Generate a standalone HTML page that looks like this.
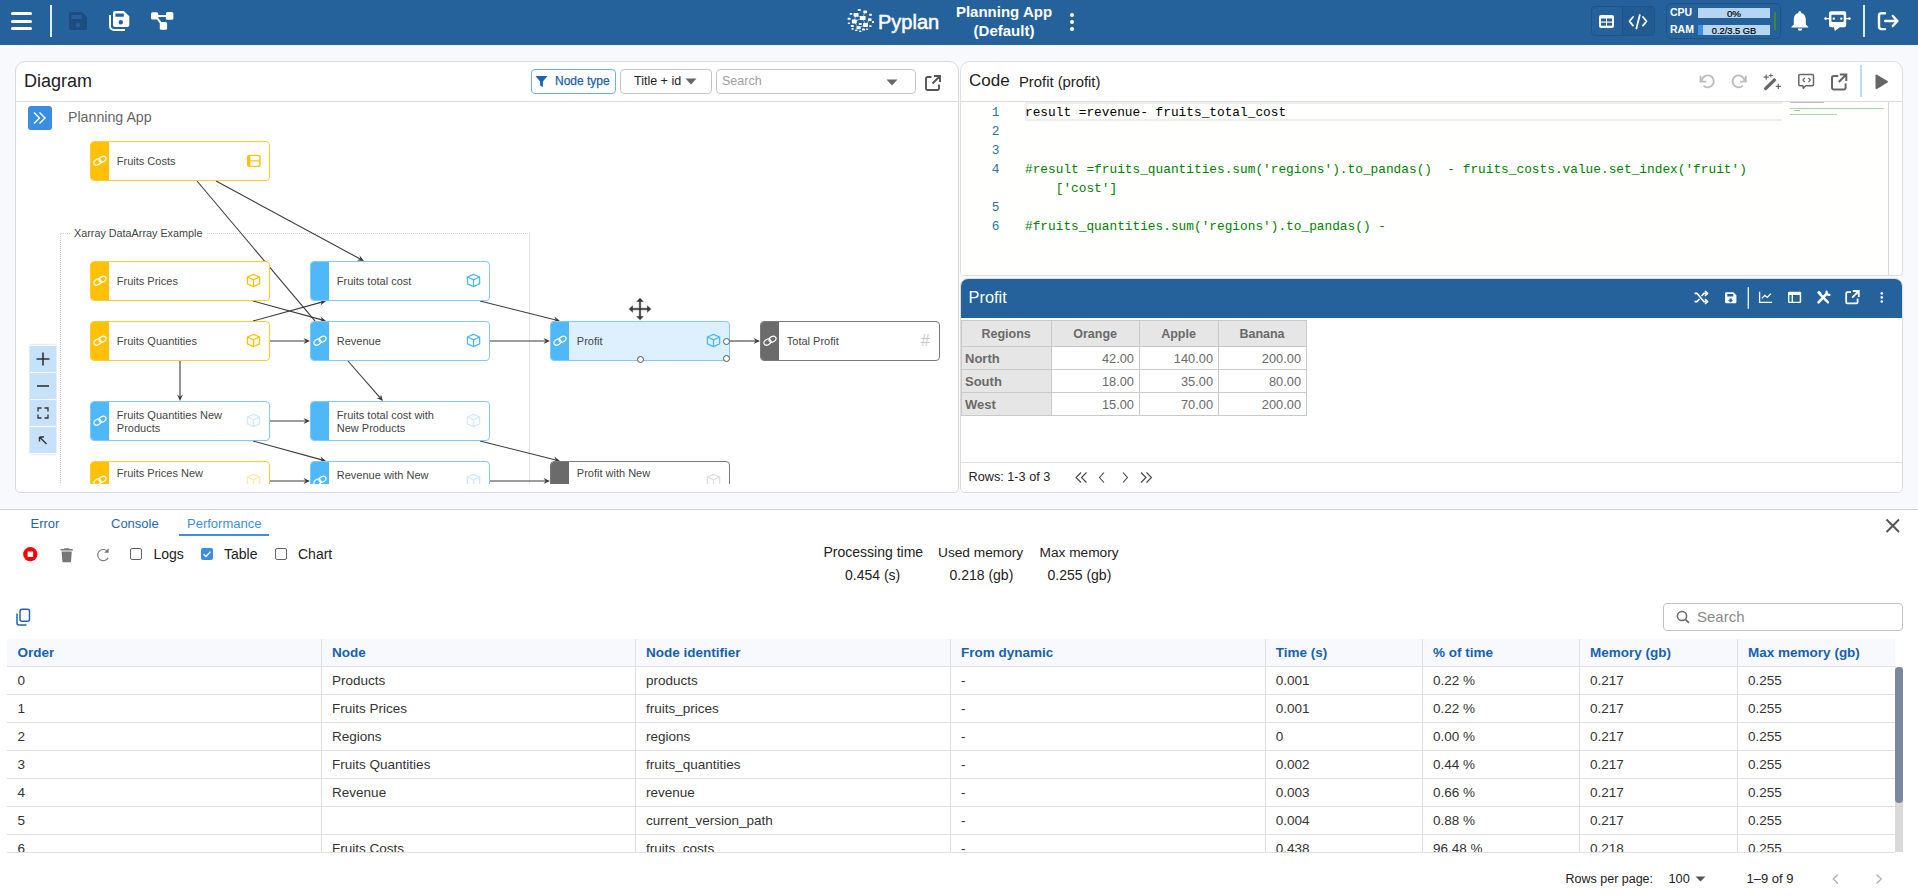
<!DOCTYPE html>
<html><head><meta charset="utf-8">
<style>
*{box-sizing:border-box;margin:0;padding:0}
html,body{width:1918px;height:896px;overflow:hidden;background:#f7f9fd;font-family:"Liberation Sans",sans-serif;color:#212121}
.a{position:absolute}
.nw{white-space:nowrap}
#hdr{left:0;top:0;width:1918px;height:45px;background:#25629b}
.panel{background:#fff;border:1px solid #d9d9d9;border-radius:10px;overflow:hidden}
</style></head><body>

<!-- HEADER -->
<div id="hdr" class="a">
  <!-- hamburger -->
  <div class="a" style="left:11px;top:12px;width:21px;height:3px;border-radius:2px;background:#fff"></div>
  <div class="a" style="left:11px;top:19.5px;width:21px;height:3px;border-radius:2px;background:#fff"></div>
  <div class="a" style="left:11px;top:27px;width:21px;height:3px;border-radius:2px;background:#fff"></div>
  <div class="a" style="left:50px;top:5px;width:2px;height:32px;background:#dcefff"></div>
  <!-- save disabled -->
  <svg class="a" style="left:69px;top:12px" width="18" height="18" viewBox="0 0 18 18"><path fill="#1d4d7e" d="M2 0h11l5 5v11a2 2 0 0 1-2 2H2a2 2 0 0 1-2-2V2a2 2 0 0 1 2-2zM2.5 3v4h10V3zM9 10.8a2.2 2.2 0 1 0 0 4.4a2.2 2.2 0 1 0 0-4.4z"/></svg>
  <!-- save all -->
  <svg class="a" style="left:108px;top:10px" width="23" height="22" viewBox="0 0 23 22"><path fill="#fff" fill-rule="evenodd" d="M7 1.1h8.8l5.5 5.2v8.8a2 2 0 0 1-2 2H7a2 2 0 0 1-2-2V3.1a2 2 0 0 1 2-2zM7.4 3.6v3.2h8.4V3.6zM12.8 10.1a2.2 2.2 0 1 0 0 4.4a2.2 2.2 0 1 0 0-4.4z"/><path fill="none" stroke="#fff" stroke-width="2" d="M2 5v11a4 4 0 0 0 4 4h11"/></svg>
  <!-- tree -->
  <svg class="a" style="left:150px;top:11px" width="26" height="20" viewBox="0 0 26 20"><rect x="1" y="1.3" width="7.3" height="7.3" rx="1.6" fill="#fff"/><rect x="15.9" y="1.1" width="7.5" height="7.7" rx="1.6" fill="#fff"/><rect x="9.8" y="11.1" width="7.3" height="7.7" rx="1.6" fill="#fff"/><path d="M7 5h10M6.8 6.5l4.3 6" stroke="#fff" stroke-width="2.1"/></svg>
  <!-- logo -->
  <svg class="a" style="left:840px;top:0px" width="40" height="40" viewBox="0 0 40 40" fill="#fff"><g stroke="#fff" stroke-width="0.6" opacity="0.85"><path d="M16 15L22.5 18M22.5 18L25.2 11.8M22.5 18L25.5 24.8M14 21.5L16 15M14 21.5L18.6 27.7M18.6 27.7L25.5 24.8M25.5 24.8L29.8 19.7M14 21.5L22.5 18"/></g><rect x="17.7" y="9.1" width="3.0" height="2.0" rx="0.6"/><rect x="23.3" y="10.5" width="3.8" height="2.7" rx="0.6"/><rect x="9.6" y="12.9" width="2.7" height="1.9" rx="0.6"/><rect x="13.6" y="12.9" width="4.9" height="3.8" rx="0.6"/><rect x="29.1" y="13.8" width="2.8" height="2.0" rx="0.6"/><rect x="19.9" y="15.9" width="5.7" height="4.2" rx="0.6"/><rect x="7.6" y="17.8" width="3.0" height="2.0" rx="0.6"/><rect x="28.1" y="18.3" width="3.4" height="2.7" rx="0.6"/><rect x="11.9" y="19.6" width="4.9" height="3.8" rx="0.6"/><rect x="32.0" y="21.0" width="2.0" height="2.0" rx="0.6"/><rect x="7.8" y="22.6" width="2.3" height="1.5" rx="0.6"/><rect x="18.8" y="22.9" width="3.0" height="2.0" rx="0.6"/><rect x="23.1" y="23.1" width="4.9" height="3.8" rx="0.6"/><rect x="10.8" y="25.0" width="3.0" height="2.0" rx="0.6"/><rect x="29.1" y="25.3" width="2.5" height="1.7" rx="0.6"/><rect x="16.5" y="26.2" width="4.2" height="3.0" rx="0.6"/><rect x="11.4" y="28.0" width="2.3" height="1.7" rx="0.6"/><rect x="22.0" y="28.6" width="3.0" height="2.0" rx="0.6"/><rect x="26.1" y="28.4" width="2.0" height="1.5" rx="0.6"/><rect x="15.1" y="29.6" width="2.3" height="1.5" rx="0.6"/><rect x="19.1" y="30.6" width="2.3" height="1.5" rx="0.6"/></svg>
  <div class="a nw" style="left:878px;top:9.7px;font-size:20px;line-height:24px;color:#fff;-webkit-text-stroke:0.5px #fff">Pyplan</div>
  <div class="a nw" style="left:940px;top:3px;width:128px;text-align:center;font-size:15px;line-height:18.8px;font-weight:bold;color:#fff">Planning App<br>(Default)</div>
  <div class="a" style="left:1069.5px;top:12.5px;width:4px;height:4px;border-radius:2px;background:#fff"></div>
  <div class="a" style="left:1069.5px;top:19.5px;width:4px;height:4px;border-radius:2px;background:#fff"></div>
  <div class="a" style="left:1069.5px;top:26.5px;width:4px;height:4px;border-radius:2px;background:#fff"></div>
  <!-- toggle group -->
  <div class="a" style="left:1591px;top:6px;width:64px;height:30px;border:1px solid #1f5486;border-radius:4px;overflow:hidden">
    <div class="a" style="left:30px;top:0;width:33px;height:28px;background:#225b91;border-left:1px solid #1f5486"></div>
  </div>
  <svg class="a" style="left:1598px;top:14px" width="17" height="15" viewBox="0 0 17 15"><rect x="1" y="1" width="15" height="13" rx="2" fill="#fff"/><rect x="3" y="4.5" width="5" height="3" fill="#25629b"/><rect x="9" y="4.5" width="5" height="3" fill="#25629b"/><rect x="3" y="8.7" width="5" height="3" fill="#25629b"/><rect x="9" y="8.7" width="5" height="3" fill="#25629b"/></svg>
  <svg class="a" style="left:1627px;top:13px" width="22" height="17" viewBox="0 0 22 17" fill="none" stroke="#fff" stroke-width="1.8" stroke-linecap="round" stroke-linejoin="round"><path d="M6 4L2.5 8.3L6 12.6M16 4l3.5 4.3L16 12.6M12.8 2l-3.4 13.5"/></svg>
  <!-- perf box -->
  <div class="a" style="left:1666px;top:3px;width:115px;height:36px;border:1px solid #1f5486;border-radius:5px"></div>
  <div class="a nw" style="left:1670px;top:6px;font-size:10.5px;line-height:12px;font-weight:bold;color:#fff">CPU</div>
  <div class="a nw" style="left:1670px;top:23px;font-size:10.5px;line-height:12px;font-weight:bold;color:#fff">RAM</div>
  <div class="a" style="left:1698px;top:8px;width:72px;height:10px;background:#b5d5f2"></div>
  <div class="a nw" style="left:1698px;top:8px;width:72px;text-align:center;font-size:9.8px;line-height:12px;color:#000;-webkit-text-stroke:0.2px #000">0%</div>
  <div class="a" style="left:1698px;top:25px;width:72px;height:10px;background:#b5d5f2"></div>
  <div class="a" style="left:1698px;top:25px;width:4.5px;height:10px;background:#3d8fe0"></div>
  <div class="a nw" style="left:1698px;top:25px;width:72px;text-align:center;font-size:9.3px;line-height:12px;color:#000;-webkit-text-stroke:0.2px #000">0.2/3.5 GB</div>
  <div class="a" style="left:1774px;top:12px;width:2px;height:18px;background:#3b8a2e"></div>
  <!-- bell -->
  <svg class="a" style="left:1790px;top:10px" width="20" height="22" viewBox="0 0 20 22"><path fill="#fff" d="M10 1.2c.7 0 1.2.5 1.2 1.1v.6c3 .7 4.6 3.3 4.6 6.4v5.2l2.5 2.6v.3H1.3v-.3l2.5-2.6V9.3c0-3.1 1.6-5.7 4.6-6.4v-.6c0-.6.5-1.1 1.2-1.1zM7.8 18.6h4.4a2.2 2.2 0 0 1-4.4 0z"/></svg>
  <!-- bot -->
  <svg class="a" style="left:1824px;top:10px" width="28" height="22" viewBox="0 0 28 22"><path fill="#fff" d="M7 1.2h13.2a2 2 0 0 1 2 2v12.1a2 2 0 0 1-2 2h-4.5l-4.8 3.6l-1-3.6H7a2 2 0 0 1-2-2V3.2a2 2 0 0 1 2-2z"/><rect x="7.4" y="4.7" width="12.3" height="7.2" rx="1" fill="#25629b"/><circle cx="9.8" cy="8.6" r="1.2" fill="#fff"/><circle cx="17.3" cy="8.6" r="1.2" fill="#fff"/><path d="M1.5 8.6h4M21.5 8.6h4.5" stroke="#fff" stroke-width="1.4"/><circle cx="1.6" cy="8.6" r="1.3" fill="#fff"/><circle cx="25.4" cy="8.6" r="1.3" fill="#fff"/></svg>
  <div class="a" style="left:1863.2px;top:5px;width:2px;height:32px;background:#d8eeff"></div>
  <!-- logout -->
  <svg class="a" style="left:1876px;top:11px" width="24" height="21" viewBox="0 0 24 21" fill="none" stroke="#fff" stroke-width="2.4" stroke-linecap="round" stroke-linejoin="round"><path d="M9 2.3H5.5a2.5 2.5 0 0 0-2.5 2.5v10.8a2.5 2.5 0 0 0 2.5 2.5H9M9.2 10h12M16.8 5l4.6 5l-4.6 5"/></svg>
</div>

<!-- DIAGRAM PANEL -->
<div class="a panel" style="left:15px;top:61px;width:944px;height:432px;border-radius:10px 10px 5px 5px">
  <div class="a nw" style="left:8px;top:9px;font-size:18px;color:#222">Diagram</div>
  <div class="a" style="left:0;top:39px;width:944px;height:1px;background:#dcdcdc"></div>
  <div class="a" style="left:515px;top:7px;width:85px;height:25px;border:1px solid #62b3f4;border-radius:4px"></div>
  <svg class="a" style="left:519px;top:13px" width="13" height="13" viewBox="0 0 13 13"><path fill="#1565b8" d="M0.5 1h12l-4.6 5.4V12L5.1 10.4V6.4z"/></svg>
  <div class="a nw" style="left:539px;top:12px;font-size:12px;line-height:15px;color:#1a5fb0;-webkit-text-stroke:0.25px #1a5fb0">Node type</div>
  <div class="a" style="left:604px;top:7px;width:92px;height:25px;border:1px solid #c4c4c4;border-radius:4px"></div>
  <div class="a nw" style="left:618px;top:12px;font-size:12.5px;line-height:15px;color:#222">Title + id</div>
  <svg class="a" style="left:669px;top:16px" width="12" height="7" viewBox="0 0 12 7"><path fill="#666" d="M0.5 0.5h11L6 6.5z"/></svg>
  <div class="a" style="left:700px;top:7px;width:200px;height:25px;border:1px solid #c4c4c4;border-radius:4px"></div>
  <div class="a nw" style="left:706px;top:12px;font-size:12.5px;line-height:15px;color:#9e9e9e">Search</div>
  <svg class="a" style="left:870px;top:17px" width="12" height="7" viewBox="0 0 12 7"><path fill="#666" d="M0.5 0.5h11L6 6.5z"/></svg>
  <svg class="a" style="left:908px;top:12px" width="18" height="18" viewBox="0 0 18 18" fill="none" stroke="#555" stroke-width="1.9"><path d="M7.5 3H3.8A1.8 1.8 0 0 0 2 4.8v9.4A1.8 1.8 0 0 0 3.8 16h9.4a1.8 1.8 0 0 0 1.8-1.8V10.5M10 2h6v6M16 2L8.5 9.5"/></svg>

  <div class="a" style="left:0;top:40px;width:942px;height:382px;overflow:hidden"><div class="a" style="left:0;top:-40px;width:942px;height:430px">
<div class="a" style="left:44px;top:171px;width:470px;height:300px;border-left:1px dotted #c8c8c8;border-top:1px dotted #d0d0d0;border-right:1px solid #e6e6e6"></div>
<div class="a nw" style="left:54px;top:164px;padding:0 4px;background:#fff;font-size:10.8px;line-height:14px;color:#444">Xarray DataArray Example</div>
<svg class="a" style="left:0;top:0" width="942" height="430"><line x1="181" y1="119" x2="300.4" y2="260.7" stroke="#3c3c3c" stroke-width="1.1"/><line x1="200" y1="119" x2="344.2" y2="197.0" stroke="#3c3c3c" stroke-width="1.1"/><path d="M348 199L340.9 198.5L344.2 197.0L343.7 193.4z" fill="#3c3c3c"/><line x1="237" y1="239" x2="305.9" y2="257.9" stroke="#3c3c3c" stroke-width="1.1"/><path d="M310 259L303.0 260.1L305.9 257.9L304.5 254.5z" fill="#3c3c3c"/><line x1="237" y1="259" x2="305.9" y2="240.1" stroke="#3c3c3c" stroke-width="1.1"/><path d="M310 239L304.5 243.5L305.9 240.1L303.0 237.9z" fill="#3c3c3c"/><line x1="254" y1="279" x2="289.7" y2="279.0" stroke="#3c3c3c" stroke-width="1.1"/><path d="M294 279L287.5 281.9L289.7 279.0L287.5 276.1z" fill="#3c3c3c"/><line x1="164" y1="299" x2="164.0" y2="334.7" stroke="#3c3c3c" stroke-width="1.1"/><path d="M164 339L161.1 332.5L164.0 334.7L166.9 332.5z" fill="#3c3c3c"/><line x1="332" y1="299" x2="364.2" y2="335.8" stroke="#3c3c3c" stroke-width="1.1"/><path d="M367 339L360.5 336.0L364.2 335.8L364.9 332.2z" fill="#3c3c3c"/><line x1="464" y1="239" x2="539.8" y2="258.0" stroke="#3c3c3c" stroke-width="1.1"/><path d="M544 259L537.0 260.2L539.8 258.0L538.4 254.6z" fill="#3c3c3c"/><line x1="474" y1="279" x2="529.7" y2="279.0" stroke="#3c3c3c" stroke-width="1.1"/><path d="M534 279L527.5 281.9L529.7 279.0L527.5 276.1z" fill="#3c3c3c"/><line x1="714" y1="279" x2="739.7" y2="279.0" stroke="#3c3c3c" stroke-width="1.1"/><path d="M744 279L737.5 281.9L739.7 279.0L737.5 276.1z" fill="#3c3c3c"/><line x1="254" y1="359" x2="289.7" y2="359.0" stroke="#3c3c3c" stroke-width="1.1"/><path d="M294 359L287.5 361.9L289.7 359.0L287.5 356.1z" fill="#3c3c3c"/><line x1="237" y1="379" x2="305.9" y2="397.9" stroke="#3c3c3c" stroke-width="1.1"/><path d="M310 399L303.0 400.1L305.9 397.9L304.5 394.5z" fill="#3c3c3c"/><line x1="464" y1="379" x2="539.8" y2="398.0" stroke="#3c3c3c" stroke-width="1.1"/><path d="M544 399L537.0 400.2L539.8 398.0L538.4 394.6z" fill="#3c3c3c"/><line x1="254" y1="419" x2="289.7" y2="419.0" stroke="#3c3c3c" stroke-width="1.1"/><path d="M294 419L287.5 421.9L289.7 419.0L287.5 416.1z" fill="#3c3c3c"/><line x1="474" y1="419" x2="529.7" y2="419.0" stroke="#3c3c3c" stroke-width="1.1"/><path d="M534 419L527.5 421.9L529.7 419.0L527.5 416.1z" fill="#3c3c3c"/></svg>
<div class="a" style="left:74px;top:79px;width:180px;height:40px;background:#fff;border:1.5px solid #ffcb2e;border-radius:4px;overflow:hidden"><div class="a" style="left:-1.5px;top:-1.5px;width:180px;height:40px"><div class="a" style="left:0;top:0;width:19px;height:100%;background:#ffc107"></div><svg class="a" style="left:3px;top:13px" width="14" height="13" viewBox="0 0 14 13" fill="none" stroke="#fff" stroke-width="1.2"><ellipse cx="4.4" cy="8.1" rx="3.7" ry="2.7" transform="rotate(-30 4.4 8.1)"/><ellipse cx="9.5" cy="5.2" rx="3.7" ry="2.7" transform="rotate(-30 9.5 5.2)"/></svg><div class="a nw" style="left:27.3px;top:14px;font-size:11px;line-height:13px;color:#454545">Fruits Costs</div><svg class="a" style="left:156px;top:13px" width="15" height="14" viewBox="0 0 15 14" fill="none" stroke="#ffc107" stroke-width="1.4"><rect x="1.7" y="1.4" width="12.3" height="11" rx="2"/><path d="M1.7 6.9h12.3"/><path d="M2.8 1.5v10.8" stroke-width="3"/></svg></div></div>
<div class="a" style="left:74px;top:199px;width:180px;height:40px;background:#fff;border:1.5px solid #ffcb2e;border-radius:4px;overflow:hidden"><div class="a" style="left:-1.5px;top:-1.5px;width:180px;height:40px"><div class="a" style="left:0;top:0;width:19px;height:100%;background:#ffc107"></div><svg class="a" style="left:3px;top:13px" width="14" height="13" viewBox="0 0 14 13" fill="none" stroke="#fff" stroke-width="1.2"><ellipse cx="4.4" cy="8.1" rx="3.7" ry="2.7" transform="rotate(-30 4.4 8.1)"/><ellipse cx="9.5" cy="5.2" rx="3.7" ry="2.7" transform="rotate(-30 9.5 5.2)"/></svg><div class="a nw" style="left:27.3px;top:14px;font-size:11px;line-height:13px;color:#454545">Fruits Prices</div><svg class="a" style="left:156px;top:12.5px" width="15" height="15" viewBox="0 0 15 15" fill="none" stroke="#ffc107" stroke-width="1.3" stroke-linejoin="round"><path d="M7.5 1.3L13.6 4v6.8L7.5 13.6L1.4 10.8V4z"/><path d="M1.4 4L7.5 6.8L13.6 4M7.5 6.8v6.8"/></svg></div></div>
<div class="a" style="left:74px;top:259px;width:180px;height:40px;background:#fff;border:1.5px solid #ffcb2e;border-radius:4px;overflow:hidden"><div class="a" style="left:-1.5px;top:-1.5px;width:180px;height:40px"><div class="a" style="left:0;top:0;width:19px;height:100%;background:#ffc107"></div><svg class="a" style="left:3px;top:13px" width="14" height="13" viewBox="0 0 14 13" fill="none" stroke="#fff" stroke-width="1.2"><ellipse cx="4.4" cy="8.1" rx="3.7" ry="2.7" transform="rotate(-30 4.4 8.1)"/><ellipse cx="9.5" cy="5.2" rx="3.7" ry="2.7" transform="rotate(-30 9.5 5.2)"/></svg><div class="a nw" style="left:27.3px;top:14px;font-size:11px;line-height:13px;color:#454545">Fruits Quantities</div><svg class="a" style="left:156px;top:12.5px" width="15" height="15" viewBox="0 0 15 15" fill="none" stroke="#ffc107" stroke-width="1.3" stroke-linejoin="round"><path d="M7.5 1.3L13.6 4v6.8L7.5 13.6L1.4 10.8V4z"/><path d="M1.4 4L7.5 6.8L13.6 4M7.5 6.8v6.8"/></svg></div></div>
<div class="a" style="left:74px;top:339px;width:180px;height:40px;background:#fff;border:1.5px solid #7ccbfa;border-radius:4px;overflow:hidden"><div class="a" style="left:-1.5px;top:-1.5px;width:180px;height:40px"><div class="a" style="left:0;top:0;width:19px;height:100%;background:#4eb8f8"></div><svg class="a" style="left:3px;top:13px" width="14" height="13" viewBox="0 0 14 13" fill="none" stroke="#fff" stroke-width="1.2"><ellipse cx="4.4" cy="8.1" rx="3.7" ry="2.7" transform="rotate(-30 4.4 8.1)"/><ellipse cx="9.5" cy="5.2" rx="3.7" ry="2.7" transform="rotate(-30 9.5 5.2)"/></svg><div class="a nw" style="left:27.3px;top:8px;font-size:11px;line-height:13px;color:#454545">Fruits Quantities New<br>Products</div><svg class="a" style="left:156px;top:12.5px" width="15" height="15" viewBox="0 0 15 15" fill="none" stroke="#cfeafc" stroke-width="1.3" stroke-linejoin="round"><path d="M7.5 1.3L13.6 4v6.8L7.5 13.6L1.4 10.8V4z"/><path d="M1.4 4L7.5 6.8L13.6 4M7.5 6.8v6.8"/></svg></div></div>
<div class="a" style="left:74px;top:399px;width:180px;height:40px;background:#fff;border:1.5px solid #ffcb2e;border-radius:4px;overflow:hidden"><div class="a" style="left:-1.5px;top:-1.5px;width:180px;height:40px"><div class="a" style="left:0;top:0;width:19px;height:100%;background:#ffc107"></div><svg class="a" style="left:3px;top:13px" width="14" height="13" viewBox="0 0 14 13" fill="none" stroke="#fff" stroke-width="1.2"><ellipse cx="4.4" cy="8.1" rx="3.7" ry="2.7" transform="rotate(-30 4.4 8.1)"/><ellipse cx="9.5" cy="5.2" rx="3.7" ry="2.7" transform="rotate(-30 9.5 5.2)"/></svg><div class="a nw" style="left:27.3px;top:6px;font-size:11px;line-height:13px;color:#454545">Fruits Prices New</div><svg class="a" style="left:156px;top:12.5px" width="15" height="15" viewBox="0 0 15 15" fill="none" stroke="#ffe9a8" stroke-width="1.3" stroke-linejoin="round"><path d="M7.5 1.3L13.6 4v6.8L7.5 13.6L1.4 10.8V4z"/><path d="M1.4 4L7.5 6.8L13.6 4M7.5 6.8v6.8"/></svg></div></div>
<div class="a" style="left:294px;top:199px;width:180px;height:40px;background:#fff;border:1.5px solid #7ccbfa;border-radius:4px;overflow:hidden"><div class="a" style="left:-1.5px;top:-1.5px;width:180px;height:40px"><div class="a" style="left:0;top:0;width:19px;height:100%;background:#4eb8f8"></div><div class="a nw" style="left:27.3px;top:14px;font-size:11px;line-height:13px;color:#454545">Fruits total cost</div><svg class="a" style="left:156px;top:12.5px" width="15" height="15" viewBox="0 0 15 15" fill="none" stroke="#4eb8f8" stroke-width="1.3" stroke-linejoin="round"><path d="M7.5 1.3L13.6 4v6.8L7.5 13.6L1.4 10.8V4z"/><path d="M1.4 4L7.5 6.8L13.6 4M7.5 6.8v6.8"/></svg></div></div>
<div class="a" style="left:294px;top:259px;width:180px;height:40px;background:#fff;border:1.5px solid #7ccbfa;border-radius:4px;overflow:hidden"><div class="a" style="left:-1.5px;top:-1.5px;width:180px;height:40px"><div class="a" style="left:0;top:0;width:19px;height:100%;background:#4eb8f8"></div><svg class="a" style="left:3px;top:13px" width="14" height="13" viewBox="0 0 14 13" fill="none" stroke="#fff" stroke-width="1.2"><ellipse cx="4.4" cy="8.1" rx="3.7" ry="2.7" transform="rotate(-30 4.4 8.1)"/><ellipse cx="9.5" cy="5.2" rx="3.7" ry="2.7" transform="rotate(-30 9.5 5.2)"/></svg><div class="a nw" style="left:27.3px;top:14px;font-size:11px;line-height:13px;color:#454545">Revenue</div><svg class="a" style="left:156px;top:12.5px" width="15" height="15" viewBox="0 0 15 15" fill="none" stroke="#4eb8f8" stroke-width="1.3" stroke-linejoin="round"><path d="M7.5 1.3L13.6 4v6.8L7.5 13.6L1.4 10.8V4z"/><path d="M1.4 4L7.5 6.8L13.6 4M7.5 6.8v6.8"/></svg></div></div>
<div class="a" style="left:294px;top:339px;width:180px;height:40px;background:#fff;border:1.5px solid #7ccbfa;border-radius:4px;overflow:hidden"><div class="a" style="left:-1.5px;top:-1.5px;width:180px;height:40px"><div class="a" style="left:0;top:0;width:19px;height:100%;background:#4eb8f8"></div><div class="a nw" style="left:27.3px;top:8px;font-size:11px;line-height:13px;color:#454545">Fruits total cost with<br>New Products</div><svg class="a" style="left:156px;top:12.5px" width="15" height="15" viewBox="0 0 15 15" fill="none" stroke="#cfeafc" stroke-width="1.3" stroke-linejoin="round"><path d="M7.5 1.3L13.6 4v6.8L7.5 13.6L1.4 10.8V4z"/><path d="M1.4 4L7.5 6.8L13.6 4M7.5 6.8v6.8"/></svg></div></div>
<div class="a" style="left:294px;top:399px;width:180px;height:40px;background:#fff;border:1.5px solid #7ccbfa;border-radius:4px;overflow:hidden"><div class="a" style="left:-1.5px;top:-1.5px;width:180px;height:40px"><div class="a" style="left:0;top:0;width:19px;height:100%;background:#4eb8f8"></div><svg class="a" style="left:3px;top:13px" width="14" height="13" viewBox="0 0 14 13" fill="none" stroke="#fff" stroke-width="1.2"><ellipse cx="4.4" cy="8.1" rx="3.7" ry="2.7" transform="rotate(-30 4.4 8.1)"/><ellipse cx="9.5" cy="5.2" rx="3.7" ry="2.7" transform="rotate(-30 9.5 5.2)"/></svg><div class="a nw" style="left:27.3px;top:8px;font-size:11px;line-height:13px;color:#454545">Revenue with New</div><svg class="a" style="left:156px;top:12.5px" width="15" height="15" viewBox="0 0 15 15" fill="none" stroke="#cfeafc" stroke-width="1.3" stroke-linejoin="round"><path d="M7.5 1.3L13.6 4v6.8L7.5 13.6L1.4 10.8V4z"/><path d="M1.4 4L7.5 6.8L13.6 4M7.5 6.8v6.8"/></svg></div></div>
<div class="a" style="left:534px;top:259px;width:180px;height:40px;background:#dcf0fd;border:1.5px solid #7ccbfa;border-radius:4px;overflow:hidden"><div class="a" style="left:-1.5px;top:-1.5px;width:180px;height:40px"><div class="a" style="left:0;top:0;width:19px;height:100%;background:#4eb8f8"></div><svg class="a" style="left:3px;top:13px" width="14" height="13" viewBox="0 0 14 13" fill="none" stroke="#fff" stroke-width="1.2"><ellipse cx="4.4" cy="8.1" rx="3.7" ry="2.7" transform="rotate(-30 4.4 8.1)"/><ellipse cx="9.5" cy="5.2" rx="3.7" ry="2.7" transform="rotate(-30 9.5 5.2)"/></svg><div class="a nw" style="left:27.3px;top:14px;font-size:11px;line-height:13px;color:#454545">Profit</div><svg class="a" style="left:156px;top:12.5px" width="15" height="15" viewBox="0 0 15 15" fill="none" stroke="#4eb8f8" stroke-width="1.3" stroke-linejoin="round"><path d="M7.5 1.3L13.6 4v6.8L7.5 13.6L1.4 10.8V4z"/><path d="M1.4 4L7.5 6.8L13.6 4M7.5 6.8v6.8"/></svg></div></div>
<div class="a" style="left:744px;top:259px;width:180px;height:40px;background:#fff;border:1.5px solid #7a7a7a;border-radius:4px;overflow:hidden"><div class="a" style="left:-1.5px;top:-1.5px;width:180px;height:40px"><div class="a" style="left:0;top:0;width:19px;height:100%;background:#6b6b6b"></div><svg class="a" style="left:3px;top:13px" width="14" height="13" viewBox="0 0 14 13" fill="none" stroke="#fff" stroke-width="1.2"><ellipse cx="4.4" cy="8.1" rx="3.7" ry="2.7" transform="rotate(-30 4.4 8.1)"/><ellipse cx="9.5" cy="5.2" rx="3.7" ry="2.7" transform="rotate(-30 9.5 5.2)"/></svg><div class="a nw" style="left:27.3px;top:14px;font-size:11px;line-height:13px;color:#454545">Total Profit</div><div class="a nw" style="left:161px;top:11px;font-size:16px;line-height:18px;color:#c8c8c8;font-style:italic">#</div></div></div>
<div class="a" style="left:534px;top:399px;width:180px;height:40px;background:#fff;border:1.5px solid #7a7a7a;border-radius:4px;overflow:hidden"><div class="a" style="left:-1.5px;top:-1.5px;width:180px;height:40px"><div class="a" style="left:0;top:0;width:19px;height:100%;background:#6b6b6b"></div><div class="a nw" style="left:27.3px;top:6px;font-size:11px;line-height:13px;color:#454545">Profit with New</div><svg class="a" style="left:156px;top:12.5px" width="15" height="15" viewBox="0 0 15 15" fill="none" stroke="#dedede" stroke-width="1.3" stroke-linejoin="round"><path d="M7.5 1.3L13.6 4v6.8L7.5 13.6L1.4 10.8V4z"/><path d="M1.4 4L7.5 6.8L13.6 4M7.5 6.8v6.8"/></svg></div></div>
<div class="a" style="left:620.5px;top:294.0px;width:7px;height:7px;border-radius:50%;background:#fff;border:1px solid #555"></div>
<div class="a" style="left:707.3px;top:276.1px;width:7px;height:7px;border-radius:50%;background:#fff;border:1px solid #555"></div>
<div class="a" style="left:707.3px;top:293.2px;width:7px;height:7px;border-radius:50%;background:#fff;border:1px solid #555"></div>
<svg class="a" style="left:611px;top:234px" width="26" height="26" viewBox="0 0 26 26"><path fill="#3a3a3a" stroke="#fff" stroke-width="0.6" d="M13 1.5l4.3 4.6h-3.1v5.7h5.7V8.7l4.6 4.3l-4.6 4.3v-3.1h-5.7v5.7h3.1L13 24.5l-4.3-4.6h3.1v-5.7H6.1v3.1L1.5 13l4.6-4.3v3.1h5.7V6.1H8.7z"/></svg>
<div class="a" style="left:12px;top:44px;width:24px;height:24px;border-radius:3px;background:#3a8ee2"></div>
<svg class="a" style="left:12px;top:44px" width="24" height="24" viewBox="0 0 24 24" fill="none" stroke="#fff" stroke-width="1.4"><path d="M6 6.5l5.5 5.5L6 17.5M11.5 6.5L17 12l-5.5 5.5"/></svg>
<div class="a nw" style="left:52px;top:47px;font-size:14.2px;line-height:17px;color:#666">Planning App</div>
<div class="a" style="left:14px;top:283px;width:26px;height:109px;background:#fff;box-shadow:0 0 2px rgba(0,0,0,.25)"></div>
<div class="a" style="left:14px;top:284px;width:26px;height:26px;background:#c6e2fb"></div>
<div class="a" style="left:14px;top:311px;width:26px;height:26px;background:#c6e2fb"></div>
<div class="a" style="left:14px;top:338px;width:26px;height:26px;background:#c6e2fb"></div>
<div class="a" style="left:14px;top:365px;width:26px;height:26px;background:#c6e2fb"></div>
<svg class="a" style="left:14px;top:284px" width="26" height="108" viewBox="0 0 26 108" fill="none" stroke="#333" stroke-width="1.6"><path d="M13 6.5v13M6.5 13h13"/><path d="M7 40h12"/><path d="M8 65.5V62h3.5M14.5 62H18v3.5M18 68.5V72h-3.5M11.5 72H8v-3.5" stroke-width="1.3"/><path d="M9.5 91l7 7M9.5 91v4.5M9.5 91H14" stroke-width="1.4"/></svg>

  </div></div>
</div>

<!-- CODE PANEL -->
<div class="a" style="left:960px;top:61px;width:943px;height:215px;background:#fff;border:1px solid #dcdfe3;border-radius:10px 10px 4px 4px;overflow:hidden">
  <div class="a nw" style="left:8px;top:9px;font-size:17px;line-height:20px;color:#222">Code</div>
  <div class="a nw" style="left:58px;top:11px;font-size:14.8px;line-height:18px;color:#222">Profit (profit)</div>
  <div class="a" style="left:899px;top:3px;width:2px;height:32px;background:#b6dbfb"></div>
  <svg class="a" style="left:738px;top:11px" width="200" height="18" viewBox="0 0 200 18">
    <g fill="none" stroke="#bdbdbd" stroke-width="1.9" stroke-linecap="butt">
      <path d="M2.8 7.8A6 6 0 1 1 4.5 12.6"/><path d="M1.5 2.8v5.8h5.8" fill="none"/>
      <path d="M45.5 7.8A6 6 0 1 0 43.8 12.6"/><path d="M46.8 2.8v5.8h-5.8"/>
    </g>
    <g fill="#666">
      <g transform="translate(-2 0)"><path d="M67.2 14.8l9.4-9.4a1 1 0 0 1 1.4 0l.9.9a1 1 0 0 1 0 1.4l-9.4 9.4a1 1 0 0 1-1.4 0l-.9-.9a1 1 0 0 1 0-1.4z"/>
      <path d="M68.6 1.5h1.2v2h2v1.2h-2v2h-1.2v-2h-2V3.5h2zM73.3 0.5h1v1.5h1.5v1h-1.5v1.5h-1V3h-1.5V2h1.5zM80.7 10.7h1.2v2h2v1.2h-2v2h-1.2v-2h-2v-1.2h2z"/></g>
    </g>
    <g fill="none" stroke="#666" stroke-width="1.5" stroke-linejoin="round">
      <path d="M101 1.5h12.3a1.2 1.2 0 0 1 1.2 1.2v8.8a1.2 1.2 0 0 1-1.2 1.2h-6.5l-2.5 2.5l-.4-2.5H101a1.2 1.2 0 0 1-1.2-1.2V2.7A1.2 1.2 0 0 1 101 1.5z"/>
      <path d="M105.8 5l-1.8 2l1.8 2M109.5 5l1.8 2l-1.8 2" stroke-width="1.2"/>
    </g>
    <g fill="none" stroke="#666" stroke-width="2">
      <path transform="translate(-1.2 0)" d="M140.5 3H136a1.8 1.8 0 0 0-1.8 1.8v10a1.8 1.8 0 0 0 1.8 1.8h10a1.8 1.8 0 0 0 1.8-1.8V10.5M142 1.5h6.5V8M148.5 1.5l-7.5 7.5"/>
    </g>
    <path fill="#666" d="M138.2 3.2h0z"/>
    
    <path fill="#666" d="M138.5 3z"/>
    <path fill="#666" d="M176.5 2.5c0-.8.8-1.2 1.5-.8l10.5 6.3c.6.4.6 1.2 0 1.6l-10.5 6.3c-.7.4-1.5 0-1.5-.8z"/>
  </svg>
  <div class="a" style="left:0;top:39px;width:943px;height:1px;background:#dcdcdc"></div>
  <div class="a" style="left:0;top:40px;width:928px;height:175px;background:#fffffe"></div>
  <div class="a" style="left:926.5px;top:40px;width:1px;height:175px;background:#d8d8d8"></div>
  <div class="a" style="left:64px;top:40px;width:757px;height:18.5px;border:2px solid #eeeeee;border-right:none"></div>
  <div class="a" style="left:0;width:38.5px;top:41px;font-family:'Liberation Mono',monospace;font-size:12.8px;line-height:19px;color:#237893;text-align:right">1<br>2<br>3<br>4<br>&nbsp;<br>5<br>6</div>
  <div class="a nw" style="left:64px;top:41px;font-family:'Liberation Mono',monospace;font-size:12.8px;line-height:19px;color:#000;white-space:pre">result =revenue- fruits_total_cost


<span style="color:#008000">#result =fruits_quantities.sum('regions').to_pandas()  - fruits_costs.value.set_index('fruit')</span>
<span style="color:#008000">    ['cost']</span>

<span style="color:#008000">#fruits_quantities.sum('regions').to_pandas() -</span></div>
  <!-- minimap -->
  <div class="a" style="left:829px;top:40.2px;width:34px;height:1px;background:#444;opacity:.35"></div>
  <div class="a" style="left:829px;top:46.3px;width:94px;height:1px;background:#2a9a2a;opacity:.4"></div>
  <div class="a" style="left:833px;top:47.8px;width:6px;height:1px;background:#2a9a2a;opacity:.5"></div>
  <div class="a" style="left:829px;top:52.1px;width:47px;height:1px;background:#2a9a2a;opacity:.4"></div>
</div>
<!-- PROFIT PANEL -->
<div class="a" style="left:960px;top:278px;width:943px;height:215px;background:#fff;border:1px solid #dcdcdc;border-radius:8px 8px 5px 5px;overflow:hidden">
  <div class="a" style="left:-1px;top:-1px;width:942px;height:40px;background:#25629b"></div>
  <div class="a nw" style="left:7.5px;top:8px;font-size:16.4px;line-height:20px;color:#fff">Profit</div>
  <svg class="a" style="left:725px;top:8px" width="200" height="22" viewBox="0 0 200 22">
    <g fill="none" stroke="#fff" stroke-width="1.6" stroke-linejoin="round">
      <path d="M8.6 6.4h2.6l6.6 8.2h2.4M8.6 14.6h2.6l2.2-2.7M15.6 9.1l2.2-2.7h2.4"/>
      <path d="M19 4l2.6 2.4L19 8.8M19 12.2l2.6 2.4L19 17"/>
    </g>
    <path fill="#fff" fill-rule="evenodd" d="M40.2 5.3h7.2l3 3v6.8a1.2 1.2 0 0 1-1.2 1.2h-9a1.2 1.2 0 0 1-1.2-1.2V6.5a1.2 1.2 0 0 1 1.2-1.2zM41.3 6.9v2.6h6V6.9zM43.4 11.6h2.4v1.6h1.5l-2.7 2.2l-2.7-2.2h1.5z"/>
    <rect x="61.6" y="0.2" width="1.4" height="21.5" fill="#e4f1fd"/>
    <g fill="none" stroke="#fff" stroke-width="1.3"><path d="M73.6 4.8v10.6h12.5M75.8 11.4l3-3l2.5 2l3.6-3.8"/></g>
    <path fill="#fff" fill-rule="evenodd" d="M103.3 4.8h10.6a1.3 1.3 0 0 1 1.3 1.3v8.7a1.3 1.3 0 0 1-1.3 1.3h-10.6a1.3 1.3 0 0 1-1.3-1.3V6.1a1.3 1.3 0 0 1 1.3-1.3zM103.4 8.1v6.6h2.2V8.1zM107 8.1v6.6h6.7V8.1z"/>
    <path fill="none" stroke="#25629b" stroke-width="1" d="M111.2 9.4v3.4h-3.1M109.3 11.5l-1.3 1.3l1.3 1.3"/>
    <g fill="none" stroke="#fff" stroke-linecap="round"><path d="M132.5 5.6l9.5 9.8" stroke-width="2.4"/><path d="M140.5 6.8l-8 8.6" stroke-width="2.6"/><path d="M140.6 4.6a2.6 2.6 0 0 0 3 3.2" stroke-width="2.2"/><path d="M133 4.8l1.8 1.8" stroke-width="1.6"/></g>
    <g fill="none" stroke="#fff" stroke-width="1.8"><path d="M165 5.2h-3.6a1.2 1.2 0 0 0-1.2 1.2v8.8a1.2 1.2 0 0 0 1.2 1.2h9a1.2 1.2 0 0 0 1.2-1.2V11.6M166.8 4h6v6M172.8 4l-6.6 6.6"/></g>
    <circle cx="195.8" cy="6.4" r="1.3" fill="#fff"/><circle cx="195.8" cy="10.4" r="1.3" fill="#fff"/><circle cx="195.8" cy="14.5" r="1.3" fill="#fff"/>
  </svg>
  <div class="a" style="left:1px;top:0;width:400px;height:150px">
  <div class="a" style="left:-1.0px;top:41.6px;width:345px;height:25.4px;background:#e6e6e6"></div><div class="a" style="left:-1.0px;top:67.0px;width:90.3px;height:69.2px;background:#e6e6e6"></div><div class="a" style="left:-1.0px;top:41.1px;width:346px;height:1px;background:#c9c9c9"></div><div class="a" style="left:-1.0px;top:66.5px;width:346px;height:1px;background:#c9c9c9"></div><div class="a" style="left:-1.0px;top:89.9px;width:346px;height:1px;background:#c9c9c9"></div><div class="a" style="left:-1.0px;top:112.8px;width:346px;height:1px;background:#c9c9c9"></div><div class="a" style="left:-1.0px;top:135.7px;width:346px;height:1px;background:#c9c9c9"></div><div class="a" style="left:-1.5px;top:41.6px;width:1px;height:94.6px;background:#c9c9c9"></div><div class="a" style="left:88.8px;top:41.6px;width:1px;height:94.6px;background:#c9c9c9"></div><div class="a" style="left:176.5px;top:41.6px;width:1px;height:94.6px;background:#c9c9c9"></div><div class="a" style="left:255.5px;top:41.6px;width:1px;height:94.6px;background:#c9c9c9"></div><div class="a" style="left:343.5px;top:41.6px;width:1px;height:94.6px;background:#c9c9c9"></div><div class="a nw" style="left:-1.0px;top:47.3px;width:90.3px;text-align:center;font-size:12.5px;line-height:16px;font-weight:bold;color:#6a6a6a">Regions</div><div class="a nw" style="left:89.3px;top:47.3px;width:87.7px;text-align:center;font-size:12.5px;line-height:16px;font-weight:bold;color:#6a6a6a">Orange</div><div class="a nw" style="left:177.0px;top:47.3px;width:79.0px;text-align:center;font-size:12.5px;line-height:16px;font-weight:bold;color:#6a6a6a">Apple</div><div class="a nw" style="left:256.0px;top:47.3px;width:88.0px;text-align:center;font-size:12.5px;line-height:16px;font-weight:bold;color:#6a6a6a">Banana</div><div class="a nw" style="left:3.0px;top:71.7px;font-size:13px;line-height:16px;font-weight:bold;color:#6a6a6a">North</div><div class="a nw" style="left:89.3px;top:71.7px;width:82.7px;text-align:right;font-size:12.8px;line-height:16px;color:#6a6a6a">42.00</div><div class="a nw" style="left:177.0px;top:71.7px;width:74.0px;text-align:right;font-size:12.8px;line-height:16px;color:#6a6a6a">140.00</div><div class="a nw" style="left:256.0px;top:71.7px;width:83.0px;text-align:right;font-size:12.8px;line-height:16px;color:#6a6a6a">200.00</div><div class="a nw" style="left:3.0px;top:95.1px;font-size:13px;line-height:16px;font-weight:bold;color:#6a6a6a">South</div><div class="a nw" style="left:89.3px;top:95.1px;width:82.7px;text-align:right;font-size:12.8px;line-height:16px;color:#6a6a6a">18.00</div><div class="a nw" style="left:177.0px;top:95.1px;width:74.0px;text-align:right;font-size:12.8px;line-height:16px;color:#6a6a6a">35.00</div><div class="a nw" style="left:256.0px;top:95.1px;width:83.0px;text-align:right;font-size:12.8px;line-height:16px;color:#6a6a6a">80.00</div><div class="a nw" style="left:3.0px;top:118.0px;font-size:13px;line-height:16px;font-weight:bold;color:#6a6a6a">West</div><div class="a nw" style="left:89.3px;top:118.0px;width:82.7px;text-align:right;font-size:12.8px;line-height:16px;color:#6a6a6a">15.00</div><div class="a nw" style="left:177.0px;top:118.0px;width:74.0px;text-align:right;font-size:12.8px;line-height:16px;color:#6a6a6a">70.00</div><div class="a nw" style="left:256.0px;top:118.0px;width:83.0px;text-align:right;font-size:12.8px;line-height:16px;color:#6a6a6a">200.00</div>
  </div>
  <div class="a" style="left:-1px;top:183.0px;width:942px;height:1px;background:#e0e0e0"></div>
  <div class="a nw" style="left:7.5px;top:191.0px;font-size:12.7px;line-height:15px;color:#222">Rows: 1-3 of 3</div>
  <svg class="a" style="left:111px;top:191px" width="84" height="15" viewBox="0 0 84 15" fill="none" stroke="#444" stroke-width="1.1">
    <path d="M9 2.5L4 7.5l5 5M14.5 2.5l-5 5l5 5M32 2.5l-4.5 5l4.5 5M51 2.5l4.5 5l-4.5 5M69 2.5l5 5l-5 5M74.5 2.5l5 5l-5 5"/>
  </svg>
</div>
<!-- BOTTOM PANEL -->
<div class="a" style="left:0;top:509px;width:1918px;height:387px;background:#fff;border-top:1px solid #d6d6d6"><div class="a" style="left:0;top:0px;width:1918px;height:387px">
  <div class="a nw" style="left:30.5px;top:6.0px;font-size:13px;line-height:16px;color:#1f66b0">Error</div>
  <div class="a nw" style="left:111px;top:6.0px;font-size:13px;line-height:16px;color:#1f66b0">Console</div>
  <div class="a nw" style="left:187px;top:6.0px;font-size:13px;line-height:16px;color:#3f8fdf">Performance</div>
  <div class="a" style="left:179px;top:24.0px;width:90px;height:2px;background:#3f8fdf"></div>
  <svg class="a" style="left:1884px;top:7.0px" width="18" height="18" viewBox="0 0 18 18" stroke="#555" stroke-width="2"><path d="M2.5 2.5l12.5 12.5M15 2.5L2.5 15"/></svg>
  <svg class="a" style="left:22px;top:36.0px" width="100" height="17" viewBox="0 0 100 17">
    <circle cx="8.3" cy="8.2" r="7.1" fill="#ff0000"/><rect x="5.6" y="5.5" width="5.5" height="5.5" fill="#fff"/>
    <path fill="#777" d="M42.5 2.3h4.3l.6.7h3.4v1.4H38.5V3h3.4zM39.6 5.4h10.2l-.8 10a1 1 0 0 1-1 .9h-6.6a1 1 0 0 1-1-.9z"/>
    <path fill="none" stroke="#777" stroke-width="1.1" d="M85 4.8A5.6 5.6 0 1 0 86.2 11.8"/><path fill="#777" d="M86.6 2.3v4.5h-4.5z"/>
  </svg>
  <div class="a" style="left:130px;top:38.0px;width:12px;height:12px;border:1.3px solid #666;border-radius:2px"></div>
  <div class="a nw" style="left:153.5px;top:36.0px;font-size:14px;line-height:16px;color:#222">Logs</div>
  <div class="a" style="left:201px;top:38.0px;width:12px;height:12px;background:#3b8de0;border-radius:2px"></div>
  <svg class="a" style="left:201px;top:38.0px" width="12" height="12" viewBox="0 0 12 12"><path d="M2.6 6.2l2.3 2.3l4.6-4.8" fill="none" stroke="#fff" stroke-width="1.4"/></svg>
  <div class="a nw" style="left:224px;top:36.0px;font-size:14px;line-height:16px;color:#222">Table</div>
  <div class="a" style="left:275px;top:38.0px;width:12px;height:12px;border:1.3px solid #666;border-radius:2px"></div>
  <div class="a nw" style="left:298px;top:36.0px;font-size:14px;line-height:16px;color:#222">Chart</div>
  <div class="a nw" style="left:823.5px;top:34.0px;font-size:14px;line-height:17px;color:#222">Processing time</div>
  <div class="a nw" style="left:845px;top:57.0px;font-size:14px;line-height:17px;color:#222">0.454 (s)</div>
  <div class="a nw" style="left:938px;top:34.0px;font-size:13.7px;line-height:17px;color:#222">Used memory</div>
  <div class="a nw" style="left:949.5px;top:57.0px;font-size:14px;line-height:17px;color:#222">0.218 (gb)</div>
  <div class="a nw" style="left:1039.5px;top:34.0px;font-size:13.7px;line-height:17px;color:#222">Max memory</div>
  <div class="a nw" style="left:1047.5px;top:57.0px;font-size:14px;line-height:17px;color:#222">0.255 (gb)</div>
  <svg class="a" style="left:14px;top:97.0px" width="18" height="20" viewBox="0 0 18 20" fill="none" stroke="#1f66b0" stroke-width="1.5"><rect x="6" y="2.3" width="9.5" height="12" rx="2"/><path d="M3 6.5v9.5a2 2 0 0 0 2 2h7.5"/></svg>
  <div class="a" style="left:1663px;top:93.0px;width:240px;height:28px;border:1px solid #c4c4c4;border-radius:4px"></div>
  <svg class="a" style="left:1675px;top:99.0px" width="16" height="16" viewBox="0 0 16 16" fill="none" stroke="#666" stroke-width="1.5"><circle cx="7" cy="7" r="4.6"/><path d="M10.4 10.4l3.5 3.5"/></svg>
  <div class="a nw" style="left:1697px;top:98.0px;font-size:15px;line-height:18px;color:#8a8a8a">Search</div>
  <div class="a" style="left:7px;top:129.0px;width:1896px;height:213px;overflow:hidden"><div class="a" style="left:0;top:0;width:1888px;height:27.5px;background:#f8f9fc"></div><div class="a" style="left:314.1px;top:0;width:1px;height:220px;background:#e0e0e0"></div><div class="a" style="left:627.9px;top:0;width:1px;height:220px;background:#e0e0e0"></div><div class="a" style="left:942.9px;top:0;width:1px;height:220px;background:#e0e0e0"></div><div class="a" style="left:1257.8px;top:0;width:1px;height:220px;background:#e0e0e0"></div><div class="a" style="left:1414.9px;top:0;width:1px;height:220px;background:#e0e0e0"></div><div class="a" style="left:1572.1px;top:0;width:1px;height:220px;background:#e0e0e0"></div><div class="a" style="left:1730.1px;top:0;width:1px;height:220px;background:#e0e0e0"></div><div class="a" style="left:0;top:27.0px;width:1888px;height:1px;background:#e0e0e0"></div><div class="a" style="left:0;top:55.0px;width:1888px;height:1px;background:#e0e0e0"></div><div class="a" style="left:0;top:83.0px;width:1888px;height:1px;background:#e0e0e0"></div><div class="a" style="left:0;top:111.0px;width:1888px;height:1px;background:#e0e0e0"></div><div class="a" style="left:0;top:139.0px;width:1888px;height:1px;background:#e0e0e0"></div><div class="a" style="left:0;top:167.0px;width:1888px;height:1px;background:#e0e0e0"></div><div class="a" style="left:0;top:195.0px;width:1888px;height:1px;background:#e0e0e0"></div><div class="a" style="left:0;top:223.0px;width:1888px;height:1px;background:#e0e0e0"></div><div class="a nw" style="left:10.5px;top:6px;font-size:13.5px;line-height:16px;font-weight:bold;color:#1762ad">Order</div><div class="a nw" style="left:325.1px;top:6px;font-size:13.5px;line-height:16px;font-weight:bold;color:#1762ad">Node</div><div class="a nw" style="left:638.9px;top:6px;font-size:13.5px;line-height:16px;font-weight:bold;color:#1762ad">Node identifier</div><div class="a nw" style="left:953.9px;top:6px;font-size:13.5px;line-height:16px;font-weight:bold;color:#1762ad">From dynamic</div><div class="a nw" style="left:1268.8px;top:6px;font-size:13.5px;line-height:16px;font-weight:bold;color:#1762ad">Time (s)</div><div class="a nw" style="left:1425.9px;top:6px;font-size:13.5px;line-height:16px;font-weight:bold;color:#1762ad">% of time</div><div class="a nw" style="left:1583.1px;top:6px;font-size:13.5px;line-height:16px;font-weight:bold;color:#1762ad">Memory (gb)</div><div class="a nw" style="left:1741.1px;top:6px;font-size:13.5px;line-height:16px;font-weight:bold;color:#1762ad">Max memory (gb)</div><div class="a nw" style="left:10.5px;top:33.5px;font-size:13.5px;line-height:16px;color:#333">0</div><div class="a nw" style="left:325.1px;top:33.5px;font-size:13.5px;line-height:16px;color:#333">Products</div><div class="a nw" style="left:638.9px;top:33.5px;font-size:13.5px;line-height:16px;color:#333">products</div><div class="a nw" style="left:953.9px;top:33.5px;font-size:13.5px;line-height:16px;color:#333">-</div><div class="a nw" style="left:1268.8px;top:33.5px;font-size:13.5px;line-height:16px;color:#333">0.001</div><div class="a nw" style="left:1425.9px;top:33.5px;font-size:13.5px;line-height:16px;color:#333">0.22 %</div><div class="a nw" style="left:1583.1px;top:33.5px;font-size:13.5px;line-height:16px;color:#333">0.217</div><div class="a nw" style="left:1741.1px;top:33.5px;font-size:13.5px;line-height:16px;color:#333">0.255</div><div class="a nw" style="left:10.5px;top:61.5px;font-size:13.5px;line-height:16px;color:#333">1</div><div class="a nw" style="left:325.1px;top:61.5px;font-size:13.5px;line-height:16px;color:#333">Fruits Prices</div><div class="a nw" style="left:638.9px;top:61.5px;font-size:13.5px;line-height:16px;color:#333">fruits_prices</div><div class="a nw" style="left:953.9px;top:61.5px;font-size:13.5px;line-height:16px;color:#333">-</div><div class="a nw" style="left:1268.8px;top:61.5px;font-size:13.5px;line-height:16px;color:#333">0.001</div><div class="a nw" style="left:1425.9px;top:61.5px;font-size:13.5px;line-height:16px;color:#333">0.22 %</div><div class="a nw" style="left:1583.1px;top:61.5px;font-size:13.5px;line-height:16px;color:#333">0.217</div><div class="a nw" style="left:1741.1px;top:61.5px;font-size:13.5px;line-height:16px;color:#333">0.255</div><div class="a nw" style="left:10.5px;top:89.5px;font-size:13.5px;line-height:16px;color:#333">2</div><div class="a nw" style="left:325.1px;top:89.5px;font-size:13.5px;line-height:16px;color:#333">Regions</div><div class="a nw" style="left:638.9px;top:89.5px;font-size:13.5px;line-height:16px;color:#333">regions</div><div class="a nw" style="left:953.9px;top:89.5px;font-size:13.5px;line-height:16px;color:#333">-</div><div class="a nw" style="left:1268.8px;top:89.5px;font-size:13.5px;line-height:16px;color:#333">0</div><div class="a nw" style="left:1425.9px;top:89.5px;font-size:13.5px;line-height:16px;color:#333">0.00 %</div><div class="a nw" style="left:1583.1px;top:89.5px;font-size:13.5px;line-height:16px;color:#333">0.217</div><div class="a nw" style="left:1741.1px;top:89.5px;font-size:13.5px;line-height:16px;color:#333">0.255</div><div class="a nw" style="left:10.5px;top:117.5px;font-size:13.5px;line-height:16px;color:#333">3</div><div class="a nw" style="left:325.1px;top:117.5px;font-size:13.5px;line-height:16px;color:#333">Fruits Quantities</div><div class="a nw" style="left:638.9px;top:117.5px;font-size:13.5px;line-height:16px;color:#333">fruits_quantities</div><div class="a nw" style="left:953.9px;top:117.5px;font-size:13.5px;line-height:16px;color:#333">-</div><div class="a nw" style="left:1268.8px;top:117.5px;font-size:13.5px;line-height:16px;color:#333">0.002</div><div class="a nw" style="left:1425.9px;top:117.5px;font-size:13.5px;line-height:16px;color:#333">0.44 %</div><div class="a nw" style="left:1583.1px;top:117.5px;font-size:13.5px;line-height:16px;color:#333">0.217</div><div class="a nw" style="left:1741.1px;top:117.5px;font-size:13.5px;line-height:16px;color:#333">0.255</div><div class="a nw" style="left:10.5px;top:145.5px;font-size:13.5px;line-height:16px;color:#333">4</div><div class="a nw" style="left:325.1px;top:145.5px;font-size:13.5px;line-height:16px;color:#333">Revenue</div><div class="a nw" style="left:638.9px;top:145.5px;font-size:13.5px;line-height:16px;color:#333">revenue</div><div class="a nw" style="left:953.9px;top:145.5px;font-size:13.5px;line-height:16px;color:#333">-</div><div class="a nw" style="left:1268.8px;top:145.5px;font-size:13.5px;line-height:16px;color:#333">0.003</div><div class="a nw" style="left:1425.9px;top:145.5px;font-size:13.5px;line-height:16px;color:#333">0.66 %</div><div class="a nw" style="left:1583.1px;top:145.5px;font-size:13.5px;line-height:16px;color:#333">0.217</div><div class="a nw" style="left:1741.1px;top:145.5px;font-size:13.5px;line-height:16px;color:#333">0.255</div><div class="a nw" style="left:10.5px;top:173.5px;font-size:13.5px;line-height:16px;color:#333">5</div><div class="a nw" style="left:325.1px;top:173.5px;font-size:13.5px;line-height:16px;color:#333"></div><div class="a nw" style="left:638.9px;top:173.5px;font-size:13.5px;line-height:16px;color:#333">current_version_path</div><div class="a nw" style="left:953.9px;top:173.5px;font-size:13.5px;line-height:16px;color:#333">-</div><div class="a nw" style="left:1268.8px;top:173.5px;font-size:13.5px;line-height:16px;color:#333">0.004</div><div class="a nw" style="left:1425.9px;top:173.5px;font-size:13.5px;line-height:16px;color:#333">0.88 %</div><div class="a nw" style="left:1583.1px;top:173.5px;font-size:13.5px;line-height:16px;color:#333">0.217</div><div class="a nw" style="left:1741.1px;top:173.5px;font-size:13.5px;line-height:16px;color:#333">0.255</div><div class="a nw" style="left:10.5px;top:201.5px;font-size:13.5px;line-height:16px;color:#333">6</div><div class="a nw" style="left:325.1px;top:201.5px;font-size:13.5px;line-height:16px;color:#333">Fruits Costs</div><div class="a nw" style="left:638.9px;top:201.5px;font-size:13.5px;line-height:16px;color:#333">fruits_costs</div><div class="a nw" style="left:953.9px;top:201.5px;font-size:13.5px;line-height:16px;color:#333">-</div><div class="a nw" style="left:1268.8px;top:201.5px;font-size:13.5px;line-height:16px;color:#333">0.438</div><div class="a nw" style="left:1425.9px;top:201.5px;font-size:13.5px;line-height:16px;color:#333">96.48 %</div><div class="a nw" style="left:1583.1px;top:201.5px;font-size:13.5px;line-height:16px;color:#333">0.218</div><div class="a nw" style="left:1741.1px;top:201.5px;font-size:13.5px;line-height:16px;color:#333">0.255</div></div><div class="a" style="left:7px;top:341.5px;width:1888px;height:1px;background:#e0e0e0"></div><div class="a" style="left:1895px;top:157.0px;width:8px;height:185px;background:#d9d9d9"></div><div class="a" style="left:1895px;top:157.0px;width:8px;height:136px;background:#7a879e;border-radius:4px"></div>
  <div class="a nw" style="left:1565.5px;top:361.0px;font-size:12.5px;line-height:16px;color:#222">Rows per page:</div>
  <div class="a nw" style="left:1668.5px;top:361.0px;font-size:12.8px;line-height:16px;color:#222">100</div>
  <svg class="a" style="left:1695px;top:366.0px" width="11" height="6" viewBox="0 0 11 6"><path fill="#555" d="M0.5 0.5h10L5.5 5.5z"/></svg>
  <div class="a nw" style="left:1746.5px;top:361.0px;font-size:13px;line-height:16px;color:#222">1–9 of 9</div>
  <svg class="a" style="left:1828px;top:361.0px" width="60" height="16" viewBox="0 0 60 16" fill="none" stroke="#b0b0b0" stroke-width="1.3"><path d="M10 3.5L5.3 8l4.7 4.5M48.5 3.5L53.2 8l-4.7 4.5"/></svg>
</div></div>
</body></html>
